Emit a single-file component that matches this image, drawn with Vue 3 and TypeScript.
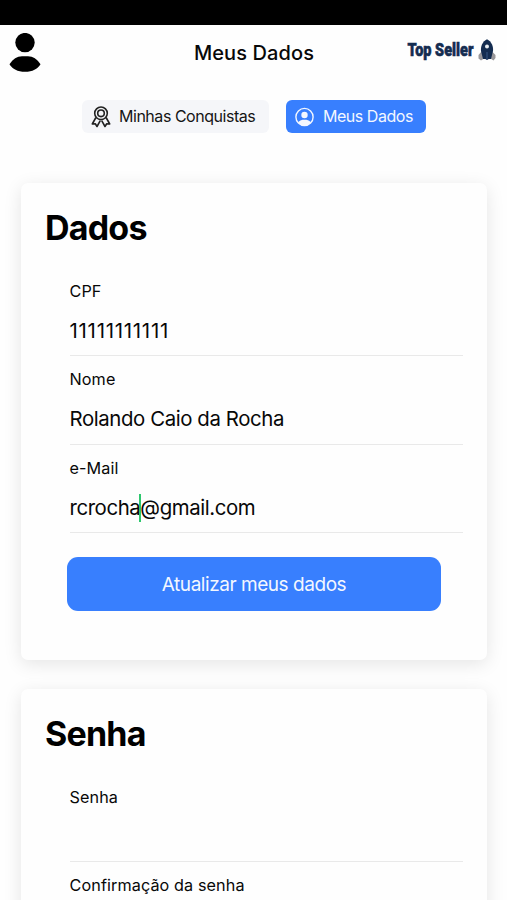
<script setup lang="ts">
import { ref } from 'vue'

interface Field {
  label: string
  value: string
  caretAt?: number
}

const personalFields = ref<Field[]>([
  { label: 'CPF', value: '11111111111' },
  { label: 'Nome', value: 'Rolando Caio da Rocha' },
  { label: 'e-Mail', value: 'rcrocha@gmail.com', caretAt: 7 },
])

const passwordFields = ref<Field[]>([
  { label: 'Senha', value: '' },
  { label: 'Confirmação da senha', value: '' },
])
</script>

<template>
  <div class="screen">
    <div class="status-bar"></div>
    <header class="header">
      <svg class="avatar" width="32" height="40" viewBox="0 0 32 40">
        <circle cx="16" cy="9.6" r="9.7" />
        <path d="M.5 31.200C4 26 8 23.200 13 23.200H19C24 23.200 28 26 31.500 31.200C28.500 36 23.500 38.800 16 38.800S3.500 36 .5 31.200Z" />
      </svg>
      <h1 class="title">Meus Dados</h1>
      <svg class="brand" width="90" height="24" viewBox="0 0 90 24">
        <text class="brand-name" x=".5" y="18.300" textLength="66" lengthAdjust="spacingAndGlyphs">Top Seller</text>
        <path class="fins" d="M75 13 71.500 17V20.500L74 22.500 77 20.500 80 22 83.500 20.500 86.500 22.500 88.500 20V17L84.500 13Z" />
        <path class="rocket" d="M80 1.200C84.500 3.500 86.500 8 86 13L84 21H76L74 13C73.500 8 75.500 3.500 80 1.200Z" />
        <circle class="porthole" cx="80" cy="8.500" r="2" />
        <path class="flame" d="M80 14V22" />
      </svg>
    </header>

    <nav class="tabs">
      <button class="tab" type="button">
        <svg class="medal" width="20" height="22" viewBox="0 0 20 22">
          <circle cx="10" cy="7.300" r="6.300" />
          <circle cx="10" cy="7.300" r="3.300" />
          <path d="M4.900 11.500 1.300 18 4.300 17.800 6 20.500 9.300 14.700M15.100 11.500 18.700 18 15.700 17.800 14 20.500 10.700 14.700" />
        </svg>
        <span class="tab-text">Minhas Conquistas</span>
      </button>
      <button class="tab active" type="button">
        <svg class="person" width="20" height="20" viewBox="0 0 20 20">
          <circle class="ring" cx="9.500" cy="10" r="8.600" />
          <circle class="solid" cx="9.500" cy="8" r="3.200" />
          <path class="solid" d="M3 15.500C5 13 6.800 12.700 9.500 12.700S14 13 16 15.500C14 18 12 18.700 9.500 18.700S5 18 3 15.500Z" />
        </svg>
        <span class="tab-text">Meus Dados</span>
      </button>
    </nav>

    <main class="cards">
      <section class="card">
        <h2 class="heading">Dados</h2>
        <div class="fields">
          <div v-for="field in personalFields" :key="field.label" class="field">
            <span class="label">{{ field.label }}</span>
            <div class="value" :class="{ digits: field.label === 'CPF' }">
              <template v-if="field.caretAt">{{ field.value.slice(0, field.caretAt) }}<i class="caret"></i>{{ field.value.slice(field.caretAt) }}</template>
              <template v-else>{{ field.value }}</template>
            </div>
          </div>
        </div>
        <button class="submit" type="button">Atualizar meus dados</button>
      </section>

      <section class="card">
        <h2 class="heading">Senha</h2>
        <div class="fields">
          <div v-for="field in passwordFields" :key="field.label" class="field">
            <span class="label">{{ field.label }}</span>
            <div class="value">{{ field.value }}</div>
          </div>
        </div>
      </section>
    </main>
  </div>
</template>

<style>
body {
  margin: 0;
  background: #fff;
}
</style>

<style scoped>
.screen {
  box-sizing: border-box;
  height: 900px;
  overflow: hidden;
  background: #fefefe;
  color: #080808;
  font-family: Inter, "Liberation Sans", sans-serif;
}
.status-bar {
  height: 25px;
  background: #000;
}
.header {
  box-sizing: border-box;
  display: grid;
  grid-template-columns: 1fr auto 1fr;
  height: 55px;
  padding: 8px 10px 0 11px;
}
.avatar {
  margin-left: -2px;
}
.title {
  margin: 6px 0 0;
  font-size: 20px;
  font-weight: 500;
  line-height: 28px;
  letter-spacing: 0.1px;
}
.brand {
  justify-self: end;
  margin-top: 5px;
}
.brand-name {
  fill: #142c50;
  stroke: #142c50;
  stroke-width: 0.6;
  font: 900 18px Roboto, sans-serif;
}
.rocket {
  fill: #142c50;
}
.fins {
  fill: #99979a;
}
.porthole {
  fill: #e8edf2;
}
.flame {
  stroke: #2d4973;
  stroke-width: 1.5;
}
.tabs {
  display: flex;
  gap: 17px;
  padding: 20px 0 0 82px;
}
button {
  border: 0;
  font-family: inherit;
}
.tab {
  display: flex;
  align-items: center;
  box-sizing: border-box;
  width: 187px;
  height: 33px;
  padding: 0 0 0 9px;
  border-radius: 6px;
  background: #f5f6f9;
  color: #151515;
  font-size: 16px;
  white-space: nowrap;
}
.tab .tab-text {
  margin-left: 8px;
  padding-bottom: 1px;
  letter-spacing: -0.47px;
}
.tab.active {
  width: 140px;
  background: #387ffe;
  color: #f3f7ff;
}
.medal {
  fill: none;
  stroke: #222;
  stroke-width: 1.6;
  stroke-linejoin: round;
}
.ring {
  fill: none;
  stroke: #f3f7ff;
  stroke-width: 1.4;
}
.solid {
  fill: #f3f7ff;
}
.cards {
  display: flex;
  flex-direction: column;
  gap: 29px;
  padding: 50px 20px 0 21px;
}
.card {
  box-sizing: border-box;
  height: 477px;
  padding: 24px;
  border-radius: 7px;
  background: #fefefe;
  box-shadow: 0 4px 18px rgba(0, 0, 0, 0.1);
}
.heading {
  margin: 0;
  color: #000;
  font-size: 34px;
  font-weight: 700;
  line-height: 41px;
  letter-spacing: -0.8px;
}
.fields {
  padding: 20px 0 0 25px;
}
.field {
  box-sizing: border-box;
  height: 88.400px;
  padding-top: 11px;
  border-bottom: 1px solid #e9e9e9;
}
.label {
  display: block;
  margin-left: -0.5px;
  font-size: 16.200px;
  line-height: 24px;
  letter-spacing: 0.1px;
}
.value {
  height: 32px;
  margin: 12px 0 0 -0.5px;
  font-size: 20.400px;
  line-height: 32px;
  letter-spacing: -0.41px;
  white-space: nowrap;
}
.value.digits {
  letter-spacing: 0.75px;
}
.caret {
  display: inline-block;
  width: 2px;
  height: 28px;
  margin: -2px -1px 0;
  vertical-align: middle;
  background: #2dc76d;
}
.submit {
  display: block;
  width: 374px;
  height: 54px;
  margin: 24px 0 0 22px;
  border-radius: 11px;
  background: #387ffe;
  color: #f3f7ff;
  font-size: 19px;
  letter-spacing: -0.45px;
}
</style>
